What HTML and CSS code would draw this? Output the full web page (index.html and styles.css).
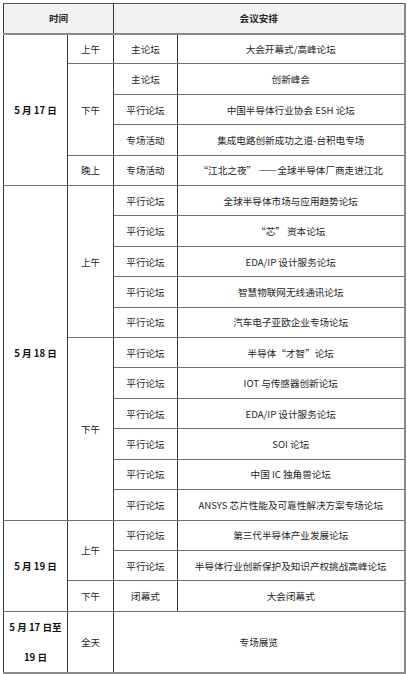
FILE: index.html
```html
<!DOCTYPE html>
<html lang="zh-CN">
<head>
<meta charset="utf-8">
<title>会议安排</title>
<link rel="stylesheet" href="styles.css">
</head>
<body>
<table class="schedule">
  <colgroup>
    <col class="c-date">
    <col class="c-period">
    <col class="c-type">
    <col class="c-topic">
  </colgroup>
  <thead>
    <tr class="head">
      <th colspan="2">时间</th>
      <th colspan="2">会议安排</th>
    </tr>
  </thead>
  <tbody>
    <tr>
      <td rowspan="5" class="date">5 月 17 日</td>
      <td>上午</td><td>主论坛</td><td>大会开幕式/高峰论坛</td>
    </tr>
    <tr>
      <td rowspan="3">下午</td><td>主论坛</td><td>创新峰会</td>
    </tr>
    <tr><td>平行论坛</td><td>中国半导体行业协会 ESH 论坛</td></tr>
    <tr><td>专场活动</td><td>集成电路创新成功之道-台积电专场</td></tr>
    <tr>
      <td>晚上</td><td>专场活动</td><td>“江北之夜” ——全球半导体厂商走进江北</td>
    </tr>
    <tr>
      <td rowspan="11" class="date">5 月 18 日</td>
      <td rowspan="5">上午</td><td>平行论坛</td><td>全球半导体市场与应用趋势论坛</td>
    </tr>
    <tr><td>平行论坛</td><td>“芯” 资本论坛</td></tr>
    <tr><td>平行论坛</td><td>EDA/IP 设计服务论坛</td></tr>
    <tr><td>平行论坛</td><td>智慧物联网无线通讯论坛</td></tr>
    <tr><td>平行论坛</td><td>汽车电子亚欧企业专场论坛</td></tr>
    <tr>
      <td rowspan="6">下午</td><td>平行论坛</td><td>半导体“才智”论坛</td>
    </tr>
    <tr><td>平行论坛</td><td>IOT 与传感器创新论坛</td></tr>
    <tr><td>平行论坛</td><td>EDA/IP 设计服务论坛</td></tr>
    <tr><td>平行论坛</td><td>SOI 论坛</td></tr>
    <tr><td>平行论坛</td><td>中国 IC 独角兽论坛</td></tr>
    <tr><td>平行论坛</td><td>ANSYS 芯片性能及可靠性解决方案专场论坛</td></tr>
    <tr>
      <td rowspan="3" class="date">5 月 19 日</td>
      <td rowspan="2">上午</td><td>平行论坛</td><td>第三代半导体产业发展论坛</td>
    </tr>
    <tr><td>平行论坛</td><td>半导体行业创新保护及知识产权挑战高峰论坛</td></tr>
    <tr><td>下午</td><td>闭幕式</td><td>大会闭幕式</td></tr>
    <tr class="allday">
      <td class="date multi">5 月 17 日至<br>19 日</td>
      <td>全天</td>
      <td colspan="2">专场展览</td>
    </tr>
  </tbody>
</table>
</body>
</html>
```

FILE: styles.css
```css
html, body {
  margin: 0;
  background: #ffffff;
}
body {
  padding: 3px 0 0 3px;
  font-family: "Noto Sans CJK SC", "Microsoft YaHei", sans-serif;
}
.schedule {
  border-collapse: collapse;
  table-layout: fixed;
  width: 401px;
  font-size: 9.6px;
  color: #262626;
  border-right: 2px solid #8a8a8a;
  border-bottom: 2px solid #8a8a8a;
}
.c-date { width: 64px; }
.c-period { width: 46px; }
.c-type { width: 64px; }
.c-topic { width: 227px; }

.schedule th,
.schedule td {
  padding: 0;
  text-align: center;
  vertical-align: middle;
  border-left: 1px solid #3a3a3a;
  border-right: 1px solid #3a3a3a;
  border-top: 1px solid #707070;
  border-bottom: 1px solid #707070;
  white-space: nowrap;
  line-height: 14px;
}
.schedule .head {
  height: 30px;
}
.schedule th {
  background: #f2f2f2;
  font-weight: bold;
  border-bottom: 2px solid #8a8a8a;
  border-top: 1px solid #555555;
}
.schedule tbody tr {
  height: 30.42px;
}
.schedule tbody tr.allday {
  height: 60px;
}
.schedule .date {
  font-weight: bold;
  color: #111111;
}
.schedule .multi {
  line-height: 30px;
}
```
